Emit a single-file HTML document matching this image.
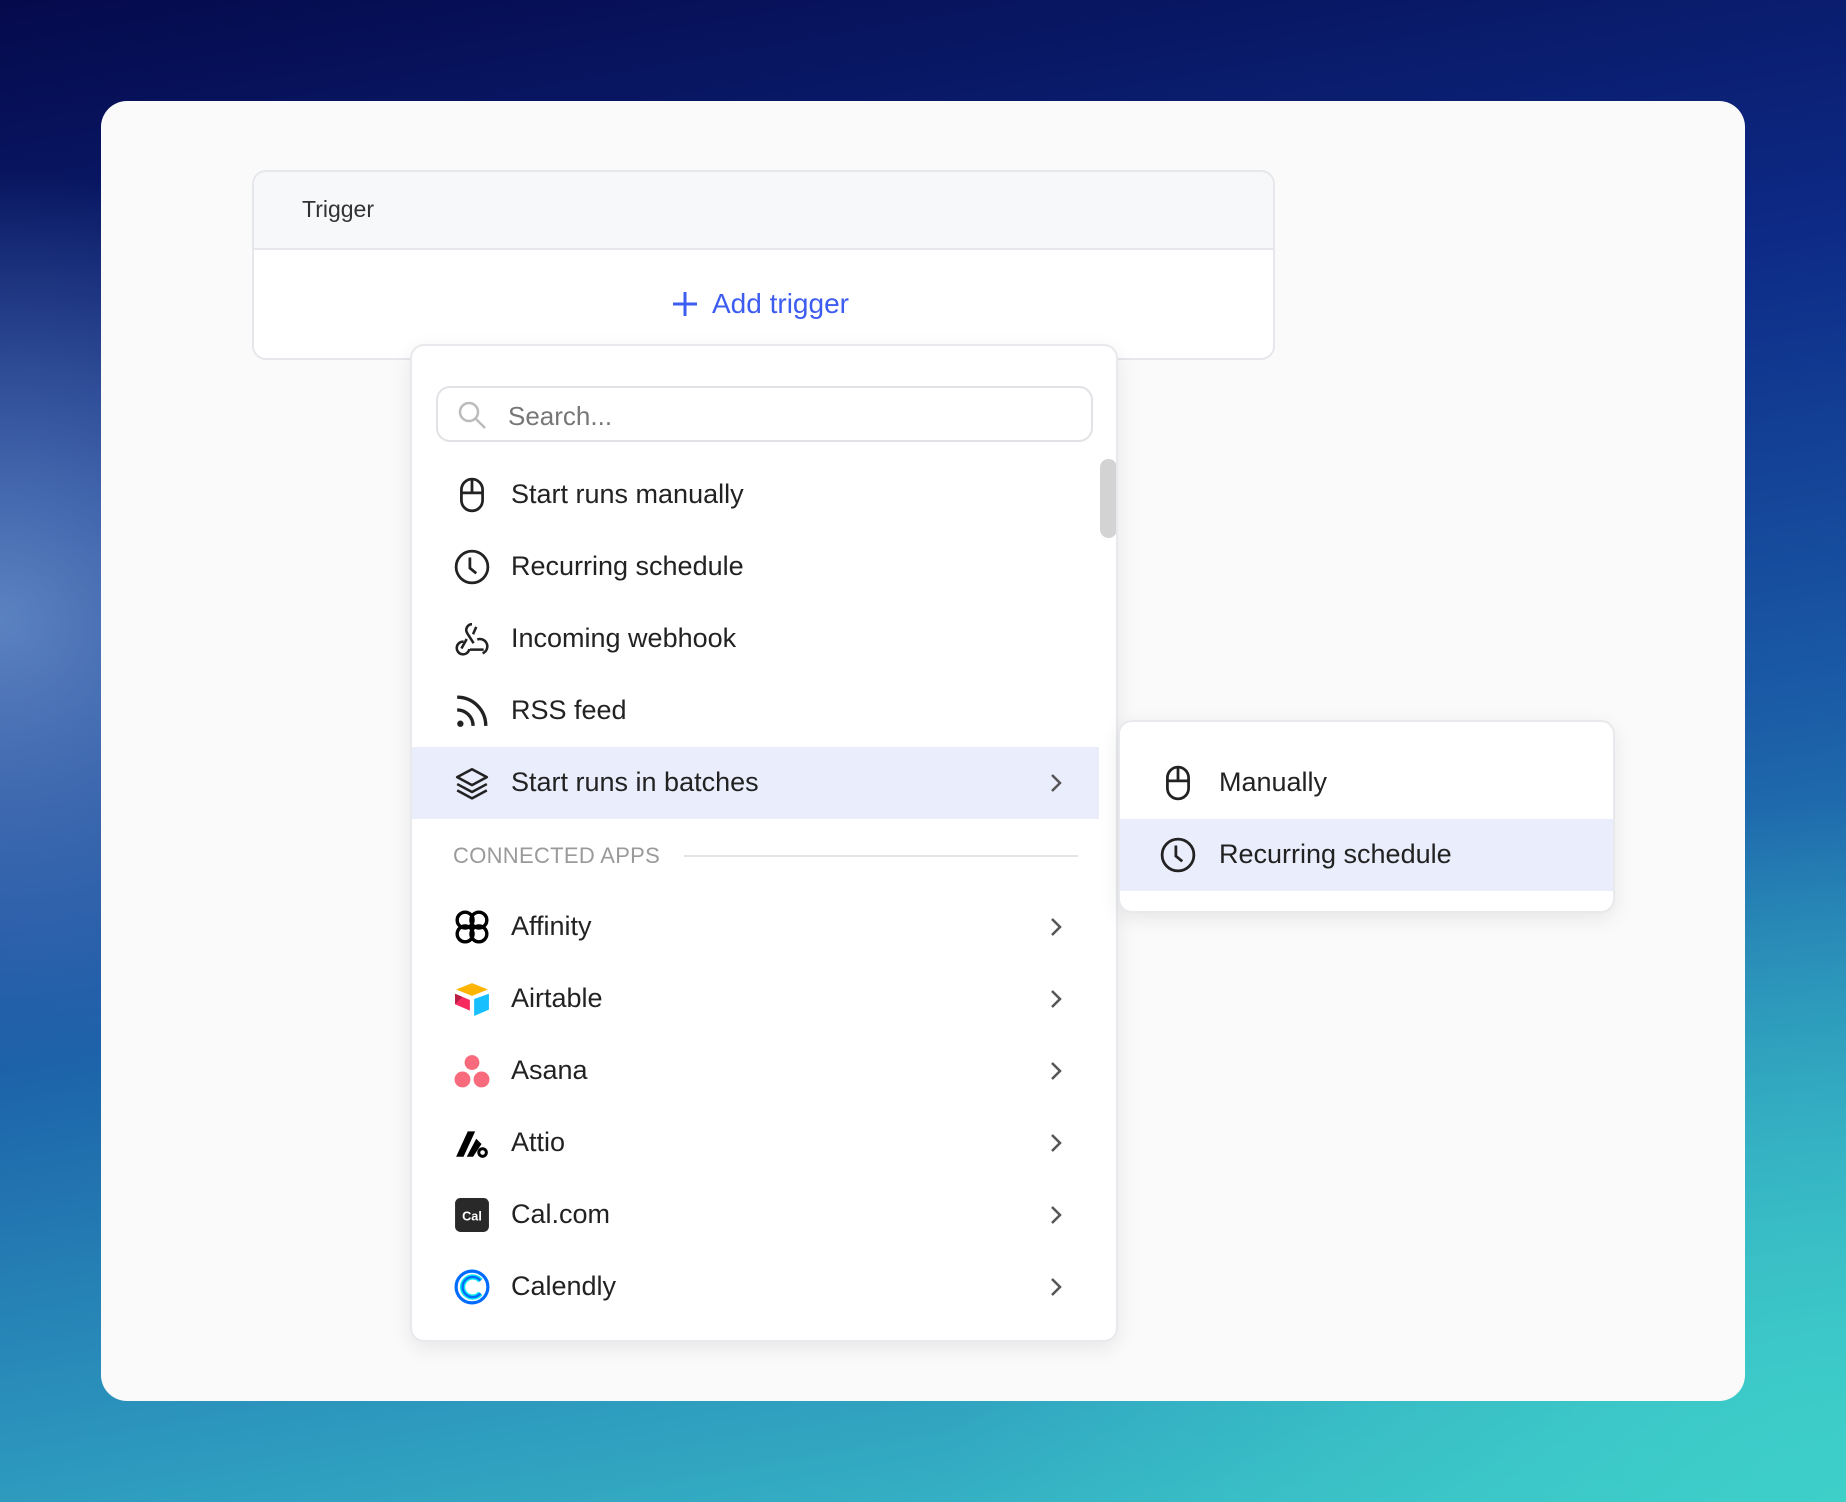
<!DOCTYPE html>
<html><head><meta charset="utf-8"><style>
*{box-sizing:border-box;margin:0;padding:0}
body{width:1846px;height:1502px;overflow:hidden;font-family:"Liberation Sans",sans-serif;position:relative;
background:
radial-gradient(ellipse 900px 700px at 1846px 1502px,#3ecfc9 0%,rgba(62,207,201,0) 100%),
radial-gradient(ellipse 500px 450px at 0px 620px,#5b82c0 0%,rgba(91,130,192,0) 100%),
linear-gradient(170deg,#050a4c 0%,#0d2a86 30%,#1a5aa6 55%,#2c96bd 80%,#3bc3c8 100%);}
.card{position:absolute;left:101px;top:101px;width:1644px;height:1300px;background:#fafafa;border-radius:26px}
.trig{position:absolute;left:252px;top:170px;width:1023px;height:190px;background:#fff;border:2px solid #e6e7ea;border-radius:14px;overflow:hidden}
.trig .hd{height:78px;background:#f7f8fa;border-bottom:2px solid #e6e7ea;font-size:23px;color:#333;padding:24px 0 0 48px}
.add{position:absolute;left:670px;top:288px;font-size:28px;color:#3d5cf0;display:flex;align-items:center}
.dd{position:absolute;left:410px;top:344px;width:708px;height:998px;background:#fff;border:2px solid #e8e9ec;border-radius:14px;box-shadow:0 6px 20px rgba(0,0,0,.08);overflow:hidden}
.search{position:absolute;left:24px;top:40px;width:657px;height:56px;border:2px solid #e1e2e5;border-radius:14px}
.search span{position:absolute;left:70px;top:13px;font-size:26px;color:#777}
.row{position:absolute;left:0;width:687px;height:72px;display:flex;align-items:center}
.row .ic{position:absolute;left:42px;top:18px;width:36px;height:36px}
.row .t{position:absolute;left:99px;top:20px;font-size:27px;color:#222}
.row .ch{position:absolute;left:634px;top:24px}
.hl{background:#eaedfc}
.sb{position:absolute;left:688px;top:113px;width:17px;height:79px;background:#d3d3d3;border-radius:9px}
.sec{position:absolute;left:41px;top:497px;font-size:22px;color:#9a9a9a;letter-spacing:.3px}
.secl{position:absolute;left:272px;top:509px;width:394px;height:2px;background:#e4e4e4}
.sub{position:absolute;left:1118px;top:720px;width:497px;height:193px;background:#fff;border:2px solid #e8e9ec;border-radius:14px;box-shadow:0 6px 20px rgba(0,0,0,.08);overflow:hidden}
.sub .row{width:497px}
</style></head><body>
<div class="card"></div>
<div class="trig"><div class="hd">Trigger</div></div>
<div class="add"><svg width="30" height="30" viewBox="0 0 30 30" style="margin-right:12px"><path d="M15 3v24M3 15h24" stroke="#3d5cf0" stroke-width="3"/></svg>Add trigger</div>

<div class="dd">
 <div class="search"><svg style="position:absolute;left:18px;top:11px" width="32" height="32" viewBox="0 0 32 32"><circle cx="13" cy="13" r="9" fill="none" stroke="#bbb" stroke-width="2.5"/><path d="M20 20l9 9" stroke="#bbb" stroke-width="2.5"/></svg><span>Search...</span></div>
 <div class="sb"></div>

 <div class="row" style="top:113px"><svg class="ic" viewBox="0 0 34 34"><rect x="7" y="2" width="20" height="30" rx="10" fill="none" stroke="#222" stroke-width="2.6"/><path d="M7 15h20M17 2v13" stroke="#222" stroke-width="2.6"/></svg><span class="t">Start runs manually</span></div>
 <div class="row" style="top:185px"><svg class="ic" viewBox="0 0 34 34"><circle cx="17" cy="17" r="15" fill="none" stroke="#222" stroke-width="2.6"/><path d="M15 8v10l6 5" fill="none" stroke="#222" stroke-width="2.6"/></svg><span class="t">Recurring schedule</span></div>
 <div class="row" style="top:257px"><svg class="ic" viewBox="0 0 34 34"><path d="M12 17l-5 9M17 3a5.5 5.5 0 0 0-4.5 8.5l6 9.5M28 27H15M21 5.5l-3 7M9 19.5a6 6 0 1 0 5.5 7M22 17.5a6 6 0 1 1 5 13" fill="none" stroke="#222" stroke-width="2.4"/></svg><span class="t">Incoming webhook</span></div>
 <div class="row" style="top:329px"><svg class="ic" viewBox="0 0 34 34"><circle cx="6" cy="29" r="3" fill="#222"/><path d="M3 16a15 15 0 0 1 15 15M3 4a27 27 0 0 1 27 27" fill="none" stroke="#222" stroke-width="3.2"/></svg><span class="t">RSS feed</span></div>
 <div class="row hl" style="top:401px"><svg class="ic" viewBox="0 0 34 34"><path d="M17 4l14 7.5-14 7.5-14-7.5z M3 18l14 7.5 14-7.5M3 24l14 7.5 14-7.5" fill="none" stroke="#222" stroke-width="2.4" stroke-linejoin="round"/></svg><span class="t">Start runs in batches</span><svg class="ch" width="20" height="24" viewBox="0 0 20 24"><path d="M6 4l8 8-8 8" fill="none" stroke="#555" stroke-width="2.5"/></svg></div>

 <div class="sec">CONNECTED APPS</div><div class="secl"></div>

 <div class="row" style="top:545px"><svg class="ic" viewBox="0 0 34 34"><g fill="none" stroke="#000" stroke-width="3.2"><circle cx="10.5" cy="10.5" r="7.5"/><circle cx="23.5" cy="10.5" r="7.5"/><circle cx="10.5" cy="23.5" r="7.5"/><circle cx="23.5" cy="23.5" r="7.5"/></g></svg><span class="t">Affinity</span><svg class="ch" width="20" height="24" viewBox="0 0 20 24"><path d="M6 4l8 8-8 8" fill="none" stroke="#555" stroke-width="2.5"/></svg></div>
 <div class="row" style="top:617px"><svg class="ic" viewBox="0 0 34 34"><path d="M17 2l15 6-15 6-15-6z" fill="#fcb400"/><path d="M19 17l14-5v15l-14 6z" fill="#18bfff"/><path d="M1 12l14 6v10L1 22z" fill="#f82b60"/><path d="M1 12l7 3-7 7z" fill="#ba1e45"/></svg><span class="t">Airtable</span><svg class="ch" width="20" height="24" viewBox="0 0 20 24"><path d="M6 4l8 8-8 8" fill="none" stroke="#555" stroke-width="2.5"/></svg></div>
 <div class="row" style="top:689px"><svg class="ic" viewBox="0 0 34 34"><circle cx="17" cy="9" r="7" fill="#f76b7d"/><circle cx="8" cy="25" r="7.5" fill="#f76b7d"/><circle cx="26" cy="25" r="7.5" fill="#f76b7d"/></svg><span class="t">Asana</span><svg class="ch" width="20" height="24" viewBox="0 0 20 24"><path d="M6 4l8 8-8 8" fill="none" stroke="#555" stroke-width="2.5"/></svg></div>
 <div class="row" style="top:761px"><svg class="ic" viewBox="0 0 34 34"><path d="M2 30l11-24h7L9 30z" fill="#000"/><path d="M12 30l9-17 5 5-8 12z" fill="#000"/><circle cx="27" cy="26" r="5" fill="#000"/><circle cx="27" cy="26" r="2.2" fill="#fff"/></svg><span class="t">Attio</span><svg class="ch" width="20" height="24" viewBox="0 0 20 24"><path d="M6 4l8 8-8 8" fill="none" stroke="#555" stroke-width="2.5"/></svg></div>
 <div class="row" style="top:833px"><svg class="ic" viewBox="0 0 34 34"><rect x="1" y="1" width="32" height="32" rx="5" fill="#292929"/><text x="17" y="22" font-family="Liberation Sans" font-size="12" font-weight="bold" fill="#fff" text-anchor="middle">Cal</text></svg><span class="t">Cal.com</span><svg class="ch" width="20" height="24" viewBox="0 0 20 24"><path d="M6 4l8 8-8 8" fill="none" stroke="#555" stroke-width="2.5"/></svg></div>
 <div class="row" style="top:905px"><svg class="ic" viewBox="0 0 34 34"><circle cx="17" cy="17" r="15" fill="none" stroke="#006bff" stroke-width="3"/><path d="M25 11a9.5 9.5 0 1 0 0 12" fill="none" stroke="#0ae8f0" stroke-width="5"/><path d="M25 11a9.5 9.5 0 1 0 0 12" fill="none" stroke="#006bff" stroke-width="2.2"/></svg><span class="t">Calendly</span><svg class="ch" width="20" height="24" viewBox="0 0 20 24"><path d="M6 4l8 8-8 8" fill="none" stroke="#555" stroke-width="2.5"/></svg></div>
</div>

<div class="sub">
 <div class="row" style="top:25px"><svg class="ic" style="left:40px" viewBox="0 0 34 34"><rect x="7" y="2" width="20" height="30" rx="10" fill="none" stroke="#222" stroke-width="2.6"/><path d="M7 15h20M17 2v13" stroke="#222" stroke-width="2.6"/></svg><span class="t">Manually</span></div>
 <div class="row hl" style="top:97px"><svg class="ic" style="left:40px" viewBox="0 0 34 34"><circle cx="17" cy="17" r="15" fill="none" stroke="#222" stroke-width="2.6"/><path d="M15 8v10l6 5" fill="none" stroke="#222" stroke-width="2.6"/></svg><span class="t">Recurring schedule</span></div>
</div>
</body></html>
